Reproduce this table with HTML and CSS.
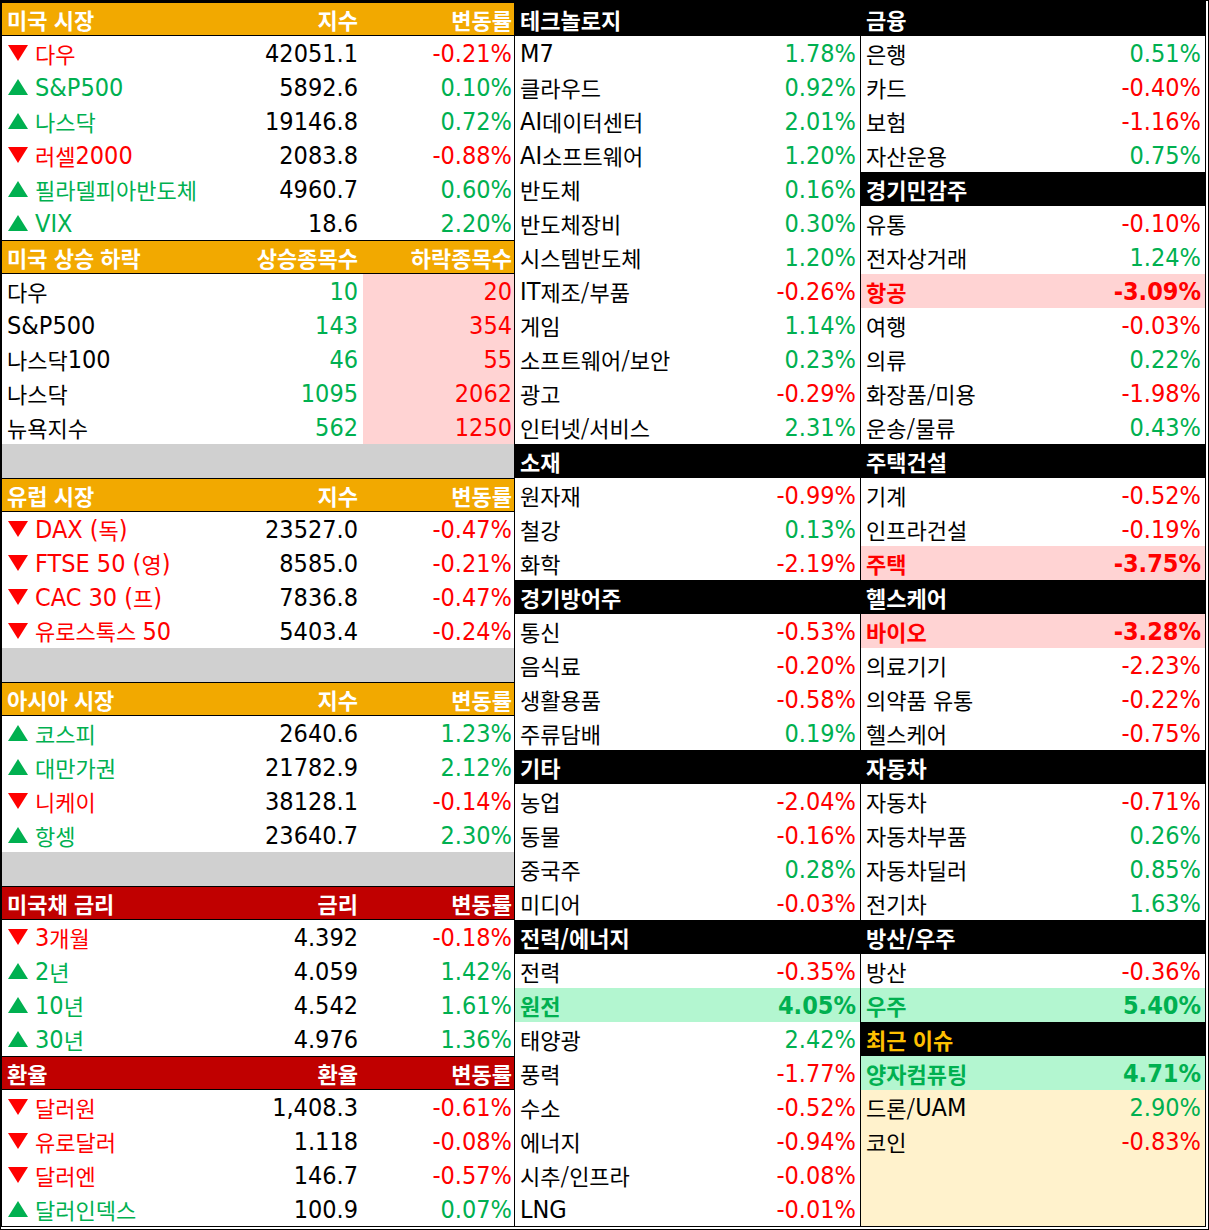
FILE: index.html
```html
<!DOCTYPE html>
<html lang="ko">
<head>
<meta charset="utf-8">
<title>시장 현황</title>
<link rel="stylesheet" href="styles.css">
</head>
<body>
<div class="sheet">
  <div class="col left">
    <div class="row hd"><div class="c n">미국 시장</div><div class="c r">지수</div><div class="c r e">변동률</div></div>
    <div class="row dn"><div class="c n"><i class="tri"></i>다우</div><div class="c r v k">42051.1</div><div class="c r e v">-0.21%</div></div>
    <div class="row up"><div class="c n"><i class="tri"></i><span class="l">S&amp;P500</span></div><div class="c r v k">5892.6</div><div class="c r e v">0.10%</div></div>
    <div class="row up"><div class="c n"><i class="tri"></i>나스닥</div><div class="c r v k">19146.8</div><div class="c r e v">0.72%</div></div>
    <div class="row dn"><div class="c n"><i class="tri"></i>러셀<span class="l">2000</span></div><div class="c r v k">2083.8</div><div class="c r e v">-0.88%</div></div>
    <div class="row up"><div class="c n"><i class="tri"></i>필라델피아반도체</div><div class="c r v k">4960.7</div><div class="c r e v">0.60%</div></div>
    <div class="row up"><div class="c n"><i class="tri"></i><span class="l">VIX</span></div><div class="c r v k">18.6</div><div class="c r e v">2.20%</div></div>
    <div class="row hd"><div class="c n">미국 상승 하락</div><div class="c r">상승종목수</div><div class="c r e">하락종목수</div></div>
    <div class="row"><div class="c n">다우</div><div class="c r v g">10</div><div class="c r e v rd pk">20</div></div>
    <div class="row"><div class="c n"><span class="l">S&amp;P500</span></div><div class="c r v g">143</div><div class="c r e v rd pk">354</div></div>
    <div class="row"><div class="c n">나스닥<span class="l">100</span></div><div class="c r v g">46</div><div class="c r e v rd pk">55</div></div>
    <div class="row"><div class="c n">나스닥</div><div class="c r v g">1095</div><div class="c r e v rd pk">2062</div></div>
    <div class="row"><div class="c n">뉴욕지수</div><div class="c r v g">562</div><div class="c r e v rd pk">1250</div></div>
    <div class="row gap"></div>
    <div class="row hd"><div class="c n">유럽 시장</div><div class="c r">지수</div><div class="c r e">변동률</div></div>
    <div class="row dn"><div class="c n"><i class="tri"></i><span class="l">DAX (</span>독<span class="l">)</span></div><div class="c r v k">23527.0</div><div class="c r e v">-0.47%</div></div>
    <div class="row dn"><div class="c n"><i class="tri"></i><span class="l">FTSE 50 (</span>영<span class="l">)</span></div><div class="c r v k">8585.0</div><div class="c r e v">-0.21%</div></div>
    <div class="row dn"><div class="c n"><i class="tri"></i><span class="l">CAC 30 (</span>프<span class="l">)</span></div><div class="c r v k">7836.8</div><div class="c r e v">-0.47%</div></div>
    <div class="row dn"><div class="c n"><i class="tri"></i><span>유로스톡스 <span class="l">50</span></span></div><div class="c r v k">5403.4</div><div class="c r e v">-0.24%</div></div>
    <div class="row gap"></div>
    <div class="row hd"><div class="c n">아시아 시장</div><div class="c r">지수</div><div class="c r e">변동률</div></div>
    <div class="row up"><div class="c n"><i class="tri"></i>코스피</div><div class="c r v k">2640.6</div><div class="c r e v">1.23%</div></div>
    <div class="row up"><div class="c n"><i class="tri"></i>대만가권</div><div class="c r v k">21782.9</div><div class="c r e v">2.12%</div></div>
    <div class="row dn"><div class="c n"><i class="tri"></i>니케이</div><div class="c r v k">38128.1</div><div class="c r e v">-0.14%</div></div>
    <div class="row up"><div class="c n"><i class="tri"></i>항셍</div><div class="c r v k">23640.7</div><div class="c r e v">2.30%</div></div>
    <div class="row gap"></div>
    <div class="row hd red"><div class="c n">미국채 금리</div><div class="c r">금리</div><div class="c r e">변동률</div></div>
    <div class="row dn"><div class="c n"><i class="tri"></i><span class="l">3</span>개월</div><div class="c r v k">4.392</div><div class="c r e v">-0.18%</div></div>
    <div class="row up"><div class="c n"><i class="tri"></i><span class="l">2</span>년</div><div class="c r v k">4.059</div><div class="c r e v">1.42%</div></div>
    <div class="row up"><div class="c n"><i class="tri"></i><span class="l">10</span>년</div><div class="c r v k">4.542</div><div class="c r e v">1.61%</div></div>
    <div class="row up"><div class="c n"><i class="tri"></i><span class="l">30</span>년</div><div class="c r v k">4.976</div><div class="c r e v">1.36%</div></div>
    <div class="row hd red"><div class="c n">환율</div><div class="c r">환율</div><div class="c r e">변동률</div></div>
    <div class="row dn"><div class="c n"><i class="tri"></i>달러원</div><div class="c r v k">1,408.3</div><div class="c r e v">-0.61%</div></div>
    <div class="row dn"><div class="c n"><i class="tri"></i>유로달러</div><div class="c r v k">1.118</div><div class="c r e v">-0.08%</div></div>
    <div class="row dn"><div class="c n"><i class="tri"></i>달러엔</div><div class="c r v k">146.7</div><div class="c r e v">-0.57%</div></div>
    <div class="row up"><div class="c n"><i class="tri"></i>달러인덱스</div><div class="c r v k">100.9</div><div class="c r e v">0.07%</div></div>
  </div>

  <div class="col mid">
    <div class="row bk"><div class="c n">테크놀로지</div><div class="c r"></div></div>
    <div class="row"><div class="c n"><span class="l">M7</span></div><div class="c r v g">1.78%</div></div>
    <div class="row"><div class="c n">클라우드</div><div class="c r v g">0.92%</div></div>
    <div class="row"><div class="c n"><span class="l">AI</span>데이터센터</div><div class="c r v g">2.01%</div></div>
    <div class="row"><div class="c n"><span class="l">AI</span>소프트웨어</div><div class="c r v g">1.20%</div></div>
    <div class="row"><div class="c n">반도체</div><div class="c r v g">0.16%</div></div>
    <div class="row"><div class="c n">반도체장비</div><div class="c r v g">0.30%</div></div>
    <div class="row"><div class="c n">시스템반도체</div><div class="c r v g">1.20%</div></div>
    <div class="row"><div class="c n"><span class="l">IT</span>제조/부품</div><div class="c r v rd">-0.26%</div></div>
    <div class="row"><div class="c n">게임</div><div class="c r v g">1.14%</div></div>
    <div class="row"><div class="c n">소프트웨어/보안</div><div class="c r v g">0.23%</div></div>
    <div class="row"><div class="c n">광고</div><div class="c r v rd">-0.29%</div></div>
    <div class="row"><div class="c n">인터넷/서비스</div><div class="c r v g">2.31%</div></div>
    <div class="row bk"><div class="c n">소재</div><div class="c r"></div></div>
    <div class="row"><div class="c n">원자재</div><div class="c r v rd">-0.99%</div></div>
    <div class="row"><div class="c n">철강</div><div class="c r v g">0.13%</div></div>
    <div class="row"><div class="c n">화학</div><div class="c r v rd">-2.19%</div></div>
    <div class="row bk"><div class="c n">경기방어주</div><div class="c r"></div></div>
    <div class="row"><div class="c n">통신</div><div class="c r v rd">-0.53%</div></div>
    <div class="row"><div class="c n">음식료</div><div class="c r v rd">-0.20%</div></div>
    <div class="row"><div class="c n">생활용품</div><div class="c r v rd">-0.58%</div></div>
    <div class="row"><div class="c n">주류담배</div><div class="c r v g">0.19%</div></div>
    <div class="row bk"><div class="c n">기타</div><div class="c r"></div></div>
    <div class="row"><div class="c n">농업</div><div class="c r v rd">-2.04%</div></div>
    <div class="row"><div class="c n">동물</div><div class="c r v rd">-0.16%</div></div>
    <div class="row"><div class="c n">중국주</div><div class="c r v g">0.28%</div></div>
    <div class="row"><div class="c n">미디어</div><div class="c r v rd">-0.03%</div></div>
    <div class="row bk"><div class="c n">전력/에너지</div><div class="c r"></div></div>
    <div class="row"><div class="c n">전력</div><div class="c r v rd">-0.35%</div></div>
    <div class="row mint b"><div class="c n g">원전</div><div class="c r v g">4.05%</div></div>
    <div class="row"><div class="c n">태양광</div><div class="c r v g">2.42%</div></div>
    <div class="row"><div class="c n">풍력</div><div class="c r v rd">-1.77%</div></div>
    <div class="row"><div class="c n">수소</div><div class="c r v rd">-0.52%</div></div>
    <div class="row"><div class="c n">에너지</div><div class="c r v rd">-0.94%</div></div>
    <div class="row"><div class="c n">시추/인프라</div><div class="c r v rd">-0.08%</div></div>
    <div class="row"><div class="c n"><span class="l">LNG</span></div><div class="c r v rd">-0.01%</div></div>
  </div>

  <div class="col right">
    <div class="row bk"><div class="c n">금융</div><div class="c r"></div></div>
    <div class="row"><div class="c n">은행</div><div class="c r v g">0.51%</div></div>
    <div class="row"><div class="c n">카드</div><div class="c r v rd">-0.40%</div></div>
    <div class="row"><div class="c n">보험</div><div class="c r v rd">-1.16%</div></div>
    <div class="row"><div class="c n">자산운용</div><div class="c r v g">0.75%</div></div>
    <div class="row bk"><div class="c n">경기민감주</div><div class="c r"></div></div>
    <div class="row"><div class="c n">유통</div><div class="c r v rd">-0.10%</div></div>
    <div class="row"><div class="c n">전자상거래</div><div class="c r v g">1.24%</div></div>
    <div class="row pk b"><div class="c n rd">항공</div><div class="c r v rd">-3.09%</div></div>
    <div class="row"><div class="c n">여행</div><div class="c r v rd">-0.03%</div></div>
    <div class="row"><div class="c n">의류</div><div class="c r v g">0.22%</div></div>
    <div class="row"><div class="c n">화장품/미용</div><div class="c r v rd">-1.98%</div></div>
    <div class="row"><div class="c n">운송/물류</div><div class="c r v g">0.43%</div></div>
    <div class="row bk"><div class="c n">주택건설</div><div class="c r"></div></div>
    <div class="row"><div class="c n">기계</div><div class="c r v rd">-0.52%</div></div>
    <div class="row"><div class="c n">인프라건설</div><div class="c r v rd">-0.19%</div></div>
    <div class="row pk b"><div class="c n rd">주택</div><div class="c r v rd">-3.75%</div></div>
    <div class="row bk"><div class="c n">헬스케어</div><div class="c r"></div></div>
    <div class="row pk b"><div class="c n rd">바이오</div><div class="c r v rd">-3.28%</div></div>
    <div class="row"><div class="c n">의료기기</div><div class="c r v rd">-2.23%</div></div>
    <div class="row"><div class="c n">의약품 유통</div><div class="c r v rd">-0.22%</div></div>
    <div class="row"><div class="c n">헬스케어</div><div class="c r v rd">-0.75%</div></div>
    <div class="row bk"><div class="c n">자동차</div><div class="c r"></div></div>
    <div class="row"><div class="c n">자동차</div><div class="c r v rd">-0.71%</div></div>
    <div class="row"><div class="c n">자동차부품</div><div class="c r v g">0.26%</div></div>
    <div class="row"><div class="c n">자동차딜러</div><div class="c r v g">0.85%</div></div>
    <div class="row"><div class="c n">전기차</div><div class="c r v g">1.63%</div></div>
    <div class="row bk"><div class="c n">방산/우주</div><div class="c r"></div></div>
    <div class="row"><div class="c n">방산</div><div class="c r v rd">-0.36%</div></div>
    <div class="row mint b"><div class="c n g">우주</div><div class="c r v g">5.40%</div></div>
    <div class="row bk"><div class="c n gold">최근 이슈</div><div class="c r"></div></div>
    <div class="row mint b"><div class="c n g">양자컴퓨팅</div><div class="c r v g">4.71%</div></div>
    <div class="row cream"><div class="c n">드론/<span class="l">UAM</span></div><div class="c r v g">2.90%</div></div>
    <div class="row cream"><div class="c n">코인</div><div class="c r v rd">-0.83%</div></div>
    <div class="fill cream"></div>
  </div>
</div>
</body>
</html>
```

FILE: styles.css
```css
body {
  margin: 0;
  background: #ffffff;
}

.sheet {
  display: flex;
  width: 1209px;
  height: 1230px;
  box-sizing: border-box;
  border-top: 2px solid #000;
  border-left: 2px solid #000;
  border-right: 4px double #000;
  border-bottom: 4px double #000;
  font-family: "Noto Sans CJK KR", sans-serif;
  font-size: 22px;
  color: #000;
  overflow: hidden;
}

.col {
  display: flex;
  flex-direction: column;
}

.left {
  width: 512px;
  border-right: 1px solid #000;
}

.mid {
  width: 345px;
  border-right: 1px solid #000;
}

.right {
  width: 344px;
}

.row {
  height: 34px;
  flex: 0 0 34px;
  display: grid;
  box-sizing: border-box;
}

.left .row {
  grid-template-columns: 1fr 121px 151px;
}

.mid .row,
.right .row {
  grid-template-columns: 1fr auto;
}

.c {
  display: flex;
  align-items: center;
  white-space: pre;
  line-height: 1;
}

.n {
  padding-left: 5px;
}

.mid .n {
  padding-left: 5px;
}

.r {
  justify-content: flex-end;
  padding-right: 5px;
}

.left .e {
  padding-right: 2px;
}

.mid .r,
.right .r {
  padding-right: 4px;
}

.l,
.v {
  font-family: "DejaVu Sans Condensed", "DejaVu Sans", sans-serif;
  font-stretch: condensed;
  font-size: 25px;
}

.hd {
  background: #f2a900;
  color: #fff;
  font-weight: bold;
  border-top: 1px solid #000;
  border-bottom: 1px solid #000;
}

.hd.red {
  background: #c00000;
}

.bk {
  background: #000;
  color: #fff;
  font-weight: bold;
}

.gold {
  color: #ffc000;
}

.gap {
  background: #d0d0d0;
}

.pk {
  background: #ffd3d3;
}

.mint {
  background: #b3f6d0;
}

.cream {
  background: #fff2cc;
}

.fill {
  flex: 1;
}

.b {
  font-weight: bold;
}

.up {
  color: #00b050;
}

.dn {
  color: #ff0000;
}

.g {
  color: #00b050;
}

.rd {
  color: #ff0000;
}

.k {
  color: #000;
}

.tri {
  display: inline-block;
  width: 0;
  height: 0;
  border-left: 10px solid transparent;
  border-right: 10px solid transparent;
  margin-left: 1px;
  margin-right: 7px;
}

.up .tri {
  border-bottom: 16px solid currentColor;
}

.dn .tri {
  border-top: 16px solid currentColor;
}
```
